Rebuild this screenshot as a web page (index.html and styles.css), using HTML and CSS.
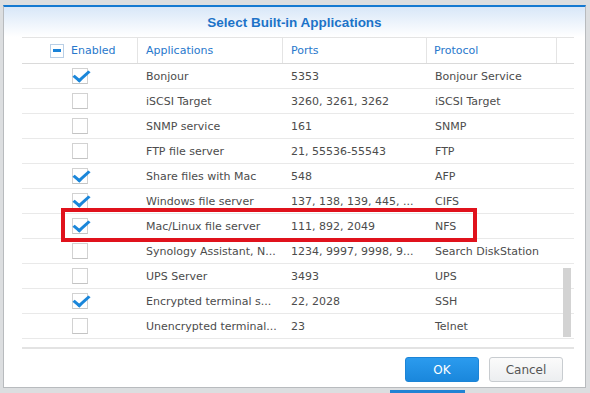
FILE: index.html
```html
<!DOCTYPE html>
<html lang="en">

<head>
    <meta charset="UTF-8">
    <meta name="viewport" content="width=device-width, initial-scale=1.0">
    <title>Select Built-in Applications</title>
    <link rel="stylesheet" href="styles.css">
</head>

<body>
    <div class="screen">
        <div class="dialog">
            <div class="title">Select Built-in Applications</div>

            <div class="grid">
                <div class="grid-head">
                    <div class="hcell col-enabled"><span class="hbox"><span class="dash"></span></span>Enabled</div>
                    <div class="hcell col-app">Applications</div>
                    <div class="hcell col-ports">Ports</div>
                    <div class="hcell col-proto">Protocol</div>
                    <div class="hcell col-rest"></div>
                </div>

                <div class="grid-body">
                    <div class="row">
                        <div class="cell col-enabled"><span class="cbox checked"></span></div>
                        <div class="cell col-app">Bonjour</div>
                        <div class="cell col-ports">5353</div>
                        <div class="cell col-proto">Bonjour Service</div>
                    </div>
                    <div class="row">
                        <div class="cell col-enabled"><span class="cbox"></span></div>
                        <div class="cell col-app">iSCSI Target</div>
                        <div class="cell col-ports">3260, 3261, 3262</div>
                        <div class="cell col-proto">iSCSI Target</div>
                    </div>
                    <div class="row">
                        <div class="cell col-enabled"><span class="cbox"></span></div>
                        <div class="cell col-app">SNMP service</div>
                        <div class="cell col-ports">161</div>
                        <div class="cell col-proto">SNMP</div>
                    </div>
                    <div class="row">
                        <div class="cell col-enabled"><span class="cbox"></span></div>
                        <div class="cell col-app">FTP file server</div>
                        <div class="cell col-ports">21, 55536-55543</div>
                        <div class="cell col-proto">FTP</div>
                    </div>
                    <div class="row">
                        <div class="cell col-enabled"><span class="cbox checked"></span></div>
                        <div class="cell col-app">Share files with Mac</div>
                        <div class="cell col-ports">548</div>
                        <div class="cell col-proto">AFP</div>
                    </div>
                    <div class="row">
                        <div class="cell col-enabled"><span class="cbox checked"></span></div>
                        <div class="cell col-app">Windows file server</div>
                        <div class="cell col-ports">137, 138, 139, 445, ...</div>
                        <div class="cell col-proto">CIFS</div>
                    </div>
                    <div class="row">
                        <div class="cell col-enabled"><span class="cbox checked"></span></div>
                        <div class="cell col-app">Mac/Linux file server</div>
                        <div class="cell col-ports">111, 892, 2049</div>
                        <div class="cell col-proto">NFS</div>
                    </div>
                    <div class="row">
                        <div class="cell col-enabled"><span class="cbox"></span></div>
                        <div class="cell col-app">Synology Assistant, N...</div>
                        <div class="cell col-ports">1234, 9997, 9998, 9...</div>
                        <div class="cell col-proto">Search DiskStation</div>
                    </div>
                    <div class="row">
                        <div class="cell col-enabled"><span class="cbox"></span></div>
                        <div class="cell col-app">UPS Server</div>
                        <div class="cell col-ports">3493</div>
                        <div class="cell col-proto">UPS</div>
                    </div>
                    <div class="row">
                        <div class="cell col-enabled"><span class="cbox checked"></span></div>
                        <div class="cell col-app">Encrypted terminal s...</div>
                        <div class="cell col-ports">22, 2028</div>
                        <div class="cell col-proto">SSH</div>
                    </div>
                    <div class="row">
                        <div class="cell col-enabled"><span class="cbox"></span></div>
                        <div class="cell col-app">Unencrypted terminal...</div>
                        <div class="cell col-ports">23</div>
                        <div class="cell col-proto">Telnet</div>
                    </div>

                    <div class="scroll-thumb"></div>
                </div>
            </div>

            <div class="footer">
                <button class="btn btn-ok">OK</button>
                <button class="btn btn-cancel">Cancel</button>
            </div>
        </div>

        <div class="behind-btn"></div>

        <!-- annotation box round the NFS row -->
        <div class="highlight"></div>
    </div>
</body>

</html>
```

FILE: styles.css
```css
body {
    margin: 0;
    font-family: "DejaVu Sans", Verdana, sans-serif;
    font-size: 11px;
    color: #4c4c4c;
}

.screen {
    position: relative;
    width: 590px;
    height: 393px;
    box-sizing: border-box;
    padding: 5px 0 0 3px;
    background: #dcdee0;
    overflow: hidden;
}

.dialog {
    width: 583px;
    height: 383px;
    box-sizing: border-box;
    background: #fff;
    border: 1px solid #b8bbbe;
    border-top: 2px solid #1479d1;
    display: flex;
    flex-direction: column;
}

.title {
    height: 30px;
    line-height: 31px;
    text-align: center;
    font-family: "Liberation Sans", Arial, sans-serif;
    font-weight: bold;
    font-size: 13.5px;
    color: #1d73c8;
    background: linear-gradient(#d8e7f8, #f4f8fd 70%, #fff);
}

.grid {
    margin: 0 11px 0 18px;
}

.grid-head {
    display: flex;
    height: 25px;
    border-top: 1px solid #e4e4e4;
    border-bottom: 1px solid #dadada;
}

.hcell {
    display: flex;
    align-items: center;
    box-sizing: border-box;
    padding-left: 8px;
    color: #2878cc;
    border-right: 1px solid #e4e4e4;
}

.hcell.col-enabled {
    padding-left: 28px;
}

.hcell.col-rest {
    border-right: none;
}

.col-enabled {
    width: 116px;
    flex: none;
}

.col-app {
    width: 145px;
    flex: none;
}

.col-ports {
    width: 144px;
    flex: none;
}

.col-proto {
    width: 130px;
    flex: none;
    padding-left: 7px;
}

.col-rest {
    flex: 1;
}

.hbox {
    width: 12px;
    height: 12px;
    border: 1px solid #b9cfe6;
    background: #fff;
    margin-right: 7px;
    display: flex;
    align-items: center;
    justify-content: center;
}

.dash {
    width: 8px;
    height: 3px;
    background: #1a83d8;
}

.grid-body {
    position: relative;
    height: 283px;
    border-bottom: 2px solid #e3e3e3;
}

.row {
    display: flex;
    height: 24px;
    border-bottom: 1px solid #e9e9e9;
}

.cell {
    display: flex;
    align-items: center;
    box-sizing: border-box;
    padding-left: 8px;
    white-space: nowrap;
}

.cell.col-enabled {
    padding-left: 0;
    justify-content: center;
}

.cbox {
    position: relative;
    width: 14px;
    height: 14px;
    border: 1px solid #d2d2d2;
    border-bottom-color: #c4c4c4;
    background: #fff;
}

.cbox.checked::after {
    content: "";
    position: absolute;
    left: 4px;
    top: -2px;
    width: 6px;
    height: 12px;
    border: solid #1a86da;
    border-width: 0 3px 3px 0;
    transform: rotate(40deg) skewX(-8deg);
}

.scroll-thumb {
    position: absolute;
    left: 541px;
    top: 204px;
    width: 8px;
    height: 69px;
    background: #d3d3d3;
}

.footer {
    display: flex;
    justify-content: flex-end;
    gap: 10px;
    padding: 8px 22px 0 0;
}

.btn {
    width: 74px;
    height: 25px;
    border-radius: 3px;
    font-family: "DejaVu Sans", Verdana, sans-serif;
    font-size: 12px;
    cursor: pointer;
}

.btn-ok {
    border: 1px solid #1c84d6;
    background: linear-gradient(#2b9bee, #1a87dc);
    color: #fff;
}

.btn-cancel {
    border: 1px solid #c8ccd0;
    background: linear-gradient(#fbfbfb, #eceef0);
    color: #555;
}

.behind-btn {
    width: 75px;
    height: 4px;
    margin: 2px 0 0 387px;
    background: #2083d4;
}

.highlight {
    position: absolute;
    left: 61px;
    top: 208px;
    width: 416px;
    height: 34px;
    box-sizing: border-box;
    border: 4px solid #e0121c;
}
```
